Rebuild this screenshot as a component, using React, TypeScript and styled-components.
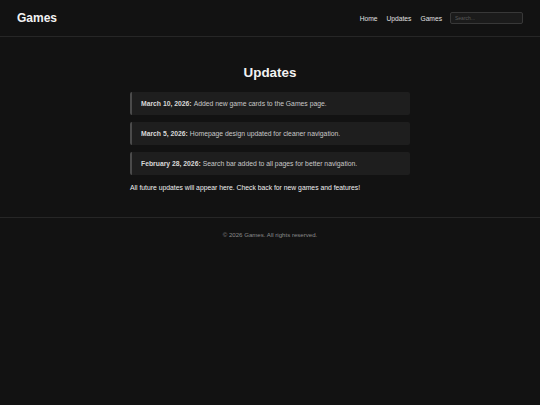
import React from "react";
import styled, { createGlobalStyle } from "styled-components";

const GlobalStyle = createGlobalStyle`
  html, body {
    margin: 0;
    padding: 0;
    background: #121212;
    color: #eeeeee;
    font-family: "Liberation Sans", Arial, sans-serif;
  }
  * {
    box-sizing: border-box;
  }
`;

const Page = styled.div`
  min-height: 405px;
  background: #121212;
`;

const Header = styled.header`
  display: flex;
  align-items: center;
  justify-content: space-between;
  height: 37px;
  padding: 0 17px;
  border-bottom: 1px solid #262626;
`;

const Logo = styled.div`
  font-size: 12px;
  font-weight: 700;
  color: #f2f2f2;
`;

const Nav = styled.nav`
  display: flex;
  align-items: center;
  gap: 9px;
`;

const NavLink = styled.a`
  font-size: 6.7px;
  color: #e0e0e0;
  text-decoration: none;
`;

const Search = styled.input`
  width: 73px;
  height: 12px;
  margin-left: -1px;
  padding: 0 4px;
  font-family: inherit;
  font-size: 5px;
  color: #ddd;
  background: #1b1b1b;
  border: 1px solid #383838;
  border-radius: 2px;
  outline: none;

  &::placeholder {
    color: #5a5a5a;
  }
`;

const Main = styled.main`
  max-width: 280px;
  margin: 0 auto;
  padding: 28px 0 26px;
`;

const Title = styled.h1`
  margin: 0 0 12px;
  text-align: center;
  font-size: 13.4px;
  font-weight: 700;
  color: #f2f2f2;
`;

const List = styled.div`
  display: flex;
  flex-direction: column;
  gap: 7px;
`;

const Card = styled.div`
  display: flex;
  align-items: center;
  height: 23px;
  padding: 0 9px;
  background: #1e1e1e;
  border-left: 2px solid #4a4a4a;
  border-radius: 2px;
  font-size: 6.8px;
  color: #c8c8c8;
`;

const DateLabel = styled.strong`
  color: #d8d8d8;
  font-weight: 700;
  margin-right: 2px;
`;

const Note = styled.p`
  margin: 9px 0 0;
  font-size: 6.8px;
  color: #f0f0f0;
`;

const Footer = styled.footer`
  border-top: 1px solid #262626;
  padding: 13px 0;
  text-align: center;
  font-size: 6.1px;
  color: #8a8a8a;
`;

const updates = [
  { date: "March 10, 2026:", text: "Added new game cards to the Games page." },
  { date: "March 5, 2026:", text: "Homepage design updated for cleaner navigation." },
  { date: "February 28, 2026:", text: "Search bar added to all pages for better navigation." },
];

export default function App() {
  return (
    <Page>
      <GlobalStyle />
      <Header>
        <Logo>Games</Logo>
        <Nav>
          <NavLink href="#">Home</NavLink>
          <NavLink href="#">Updates</NavLink>
          <NavLink href="#">Games</NavLink>
          <Search placeholder="Search..." />
        </Nav>
      </Header>
      <Main>
        <Title>Updates</Title>
        <List>
          {updates.map((u) => (
            <Card key={u.date}>
              <DateLabel>{u.date}</DateLabel>
              {u.text}
            </Card>
          ))}
        </List>
        <Note>All future updates will appear here. Check back for new games and features!</Note>
      </Main>
      <Footer>© 2026 Games. All rights reserved.</Footer>
    </Page>
  );
}
